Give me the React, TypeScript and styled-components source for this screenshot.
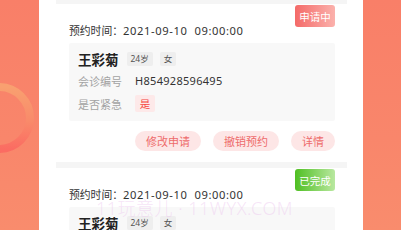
import React from 'react';
import styled, { createGlobalStyle } from 'styled-components';

const GlobalStyle = createGlobalStyle`
	html, body {
		margin: 0;
		padding: 0;
		overflow: hidden;
	}
	body {
		font-family: 'Noto Sans', 'Noto Sans CJK SC', sans-serif;
	}
`;

type Status = 'pending' | 'done';

interface Appointment {
	id: string;
	time: string;
	name: string;
	age: string;
	gender: string;
	code: string;
	urgent: string;
	status: Status;
	statusText: string;
	actions: string[];
}

const appointments: Appointment[] = [
	{
		id: '1',
		time: '2021-09-10  09:00:00',
		name: '王彩菊',
		age: '24岁',
		gender: '女',
		code: 'H854928596495',
		urgent: '是',
		status: 'pending',
		statusText: '申请中',
		actions: [ '修改申请', '撤销预约', '详情' ]
	},
	{
		id: '2',
		time: '2021-09-10  09:00:00',
		name: '王彩菊',
		age: '24岁',
		gender: '女',
		code: 'H854928596495',
		urgent: '是',
		status: 'done',
		statusText: '已完成',
		actions: [ '详情' ]
	}
];

const Page = styled.div`
	position: relative;
	display: flex;
	width: 401px;
	height: 230px;
	overflow: hidden;
	background: linear-gradient(180deg, #f97f68 0%, #f9866b 60%, #f98c6d 100%);
`;

const Ring = styled.svg`
	position: absolute;
	left: -43px;
	top: 76px;
`;

const Screen = styled.div`
	width: 324px;
	margin-left: 39px;
	background: #fff;
	padding: 0 16px 0 17px;
	box-sizing: border-box;
`;

const List = styled.div`
	margin-top: -2px;
	display: flex;
	flex-direction: column;
`;

const Separator = styled.div`
	height: 6px;
	background: #f5f5f5;
`;

const Card = styled.div`
	position: relative;
	padding: 18px 12px 11px 13px;
`;

const Badge = styled.div<{ $status: Status }>`
	position: absolute;
	top: 1px;
	right: 12px;
	width: 40px;
	height: 22px;
	border-radius: 3px;
	display: flex;
	align-items: center;
	justify-content: center;
	font-family: 'Noto Sans CJK SC', sans-serif;
	font-size: 10.5px;
	color: #fff;
	background: ${(p) =>
		p.$status === 'pending'
			? 'linear-gradient(90deg, #f46a68 0%, #fbb1ac 100%)'
			: 'linear-gradient(90deg, #4fbf22 0%, #b9e8a0 100%)'};
`;

const TimeLine = styled.div`
	font-size: 10.8px;
	line-height: 18px;
	color: #333;
	margin-bottom: 3px;
	white-space: pre;
`;

const TimeValue = styled.span`
	font-size: 11.2px;
	letter-spacing: 0.6px;
`;

const InfoBox = styled.div`
	background: #f8f8f8;
	border-radius: 2px;
	padding: 6px 9px;
`;

const NameRow = styled.div`
	display: flex;
	align-items: center;
	height: 20px;
	gap: 7px;
`;

const Name = styled.span`
	font-family: 'Noto Sans CJK SC', sans-serif;
	font-size: 13.5px;
	font-weight: 700;
	color: #222;
	margin-right: 1px;
`;

const Tag = styled.span`
	font-size: 8.5px;
	line-height: 14px;
	padding: 0 4px;
	background: #eeeeee;
	color: #555;
	border-radius: 2px;
`;

const Row = styled.div`
	display: flex;
	align-items: center;
	height: 23px;
`;

const Label = styled.span`
	width: 57px;
	font-size: 11px;
	color: #a3a3a3;
`;

const Value = styled.span`
	font-size: 11px;
	letter-spacing: 0.3px;
	color: #333;
`;

const UrgentTag = styled.span`
	width: 20px;
	height: 17px;
	display: flex;
	align-items: center;
	justify-content: center;
	font-size: 10.5px;
	color: #f5453f;
	background: #fde9e9;
	border-radius: 2px;
`;

const Actions = styled.div`
	display: flex;
	justify-content: flex-end;
	gap: 12px;
	margin-top: 10px;
`;

const ActionButton = styled.div`
	height: 20px;
	padding: 0 11px;
	border-radius: 10px;
	display: flex;
	align-items: center;
	font-size: 11px;
	color: #ee6b6b;
	background: #fde6e6;
`;

const Watermark = styled.div`
	position: absolute;
	left: 96px;
	top: 194px;
	font-size: 18px;
	font-weight: 300;
	letter-spacing: 0.5px;
	color: rgba(236, 196, 238, 0.45);
	white-space: pre;
	pointer-events: none;
`;

function AppointmentCard({ item }: { item: Appointment }) {
	return (
		<Card>
			<Badge $status={item.status}>{item.statusText}</Badge>
			<TimeLine>
				预约时间：<TimeValue>{item.time}</TimeValue>
			</TimeLine>
			<InfoBox>
				<NameRow>
					<Name>{item.name}</Name>
					<Tag>{item.age}</Tag>
					<Tag>{item.gender}</Tag>
				</NameRow>
				<Row>
					<Label>会诊编号</Label>
					<Value>{item.code}</Value>
				</Row>
				<Row>
					<Label>是否紧急</Label>
					<UrgentTag>{item.urgent}</UrgentTag>
				</Row>
			</InfoBox>
			<Actions>
				{item.actions.map((a) => <ActionButton key={a}>{a}</ActionButton>)}
			</Actions>
		</Card>
	);
}

export default function App() {
	return (
		<Page>
			<GlobalStyle />
			<Ring width="84" height="84" viewBox="0 0 84 84">
				<defs>
					<linearGradient id="ringGrad" x1="0" y1="0" x2="0" y2="1">
						<stop offset="0%" stopColor="#f9a070" />
						<stop offset="55%" stopColor="#f98a6a" />
						<stop offset="100%" stopColor="#fb6c62" />
					</linearGradient>
				</defs>
				<circle cx="42" cy="42" r="31" fill="none" stroke="url(#ringGrad)" strokeWidth="8" />
			</Ring>
			<Screen>
				<List>
					{appointments.map((item) => (
						<React.Fragment key={item.id}>
							<Separator />
							<AppointmentCard item={item} />
						</React.Fragment>
					))}
				</List>
			</Screen>
			<Watermark>11玩意儿 · 11WYX.COM</Watermark>
		</Page>
	);
}
